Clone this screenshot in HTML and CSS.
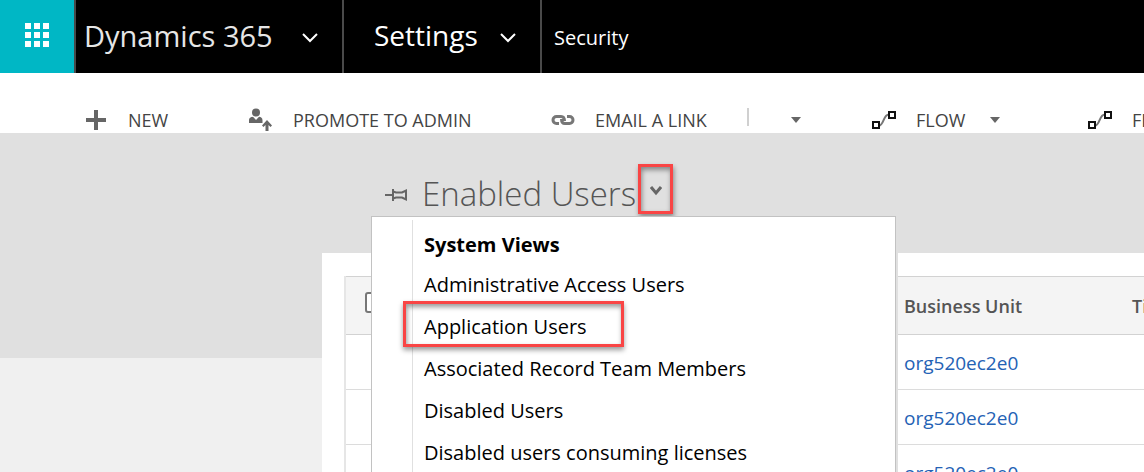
FILE: index.html
```html
<!DOCTYPE html>
<html lang="en">
<head>
<meta charset="utf-8">
<title>Users - Dynamics 365</title>
<link rel="stylesheet" href="styles.css">
</head>
<body>
<header class="topbar">
  <button class="waffle" aria-label="App launcher">
    <svg width="24" height="24" viewBox="0 0 24 24" fill="#fff" shape-rendering="crispEdges"><path d="M0 0h6v6H0zM9 0h6v6H9zM18 0h6v6h-6zM0 9h6v6H0zM9 9h6v6H9zM18 9h6v6h-6zM0 18h6v6H0zM9 18h6v6H9zM18 18h6v6h-6z"/></svg>
  </button>
  <button class="nav-item nav-brand"><span>Dynamics 365</span>
    <svg class="nav-chevron" width="16" height="10" viewBox="0 0 16 10" fill="none" stroke="#fff" stroke-width="2"><path d="M1 1l7 7 7-7"/></svg>
  </button>
  <button class="nav-item nav-area"><span>Settings</span>
    <svg class="nav-chevron" width="16" height="10" viewBox="0 0 16 10" fill="none" stroke="#fff" stroke-width="2"><path d="M1 1l7 7 7-7"/></svg>
  </button>
  <a class="nav-page" href="#">Security</a>
</header>

<nav class="commands" aria-label="Commands">
  <button class="command command-new">
    <svg class="command-icon" width="20" height="20" viewBox="0 0 20 20" fill="#666"><path d="M8 0h4v8h8v4h-8v8H8v-8H0V8h8z"/></svg>
    <span>NEW</span>
  </button>
  <button class="command command-promote">
    <svg class="command-icon" width="24" height="24" viewBox="0 0 24 24" fill="#666"><circle cx="7" cy="4.500" r="4"/><path d="M0 15v-2.500C0 9.500 2 9 4 8.700L7 12l3-3.300c2 .300 3.500 1 3.500 3.800V15z"/><path d="M18 12l5 5.500-1.500 1.500-2-2V23h-3v-6l-2 2-1.500-1.500z"/></svg>
    <span>PROMOTE TO ADMIN</span>
  </button>
  <button class="command command-email">
    <svg class="command-icon" width="24" height="12" viewBox="0 0 24 12" fill="none" stroke="#777" stroke-width="3"><path d="M8 9.500H5.500a3.500 3.500 0 0 1 0-7H10q3.500 0 3.500 4.500"/><path d="M16 2.500h2.500a3.500 3.500 0 0 1 0 7H14q-3.500 0-3.500-4.500"/></svg>
    <span>EMAIL A LINK</span>
  </button>
  <span class="divider"></span>
  <button class="more" aria-label="More commands"><svg class="caret" width="10" height="6" viewBox="0 0 10 6" fill="#666"><path d="M0 0h10L5 6z"/></svg></button>
  <button class="command command-flow">
    <svg class="command-icon" width="24" height="18" viewBox="0 0 24 18" fill="none"><path d="M7 14.500c5 0 4-11 10-11" stroke="#777" stroke-width="2"/><path d="M1 11h6v6H1zM17 1h6v6h-6z" fill="#fff" stroke="#111" stroke-width="2"/></svg>
    <span>FLOW</span>
    <svg class="caret" width="10" height="6" viewBox="0 0 10 6" fill="#666"><path d="M0 0h10L5 6z"/></svg>
  </button>
  <button class="command">
    <svg class="command-icon" width="24" height="18" viewBox="0 0 24 18" fill="none"><path d="M7 14.500c5 0 4-11 10-11" stroke="#777" stroke-width="2"/><path d="M1 11h6v6H1zM17 1h6v6h-6z" fill="#fff" stroke="#111" stroke-width="2"/></svg>
    <span>FLOW</span>
  </button>
</nav>

<main class="workspace">
  <section class="view">
    <div class="view-head">
      <svg class="pin" width="22" height="14" viewBox="0 0 22 14" fill="none" stroke="#666" stroke-width="2"><path d="M0 7h8M8 1v12M8 3.500l3 1h6l4-2v9l-4-2h-6l-3 1"/></svg>
      <h1 class="view-title">Enabled Users</h1>
      <button class="view-switch" aria-label="Select a view">
        <svg width="12" height="10" viewBox="0 0 12 10" fill="none" stroke="#666" stroke-width="3"><path d="M1 1l5 6 5-6"/></svg>
      </button>
    </div>
    <div class="view-menu">
      <h2 class="menu-heading">System Views</h2>
      <a class="menu-item" href="#">Administrative Access Users</a>
      <a class="menu-item menu-item-marked" href="#">Application Users</a>
      <a class="menu-item" href="#">Associated Record Team Members</a>
      <a class="menu-item" href="#">Disabled Users</a>
      <a class="menu-item" href="#">Disabled users consuming licenses</a>
    </div>
    <div class="grid-panel">
      <table class="grid">
        <colgroup><col class="col-select"><col class="col-name"><col class="col-unit"><col></colgroup>
        <thead><tr><th><input class="check" type="checkbox" aria-label="Select all"></th><th></th><th scope="col">Business Unit</th><th scope="col">Title</th></tr></thead>
        <tbody>
          <tr><td></td><td></td><td><a href="#">org520ec2e0</a></td><td></td></tr>
          <tr><td></td><td></td><td><a href="#">org520ec2e0</a></td><td></td></tr>
          <tr><td></td><td></td><td><a href="#">org520ec2e0</a></td><td></td></tr>
        </tbody>
      </table>
    </div>
  </section>
</main>
</body>
</html>
```

FILE: styles.css
```css
*, *::after { box-sizing: border-box; }
body {
  margin: 0;
  height: 100vh;
  display: flex;
  flex-direction: column;
  overflow: hidden;
  background: #fff;
  font-family: "Open Sans", "Noto Sans", sans-serif;
  font-size: 19px;
}
button { border: 0; padding: 0; background: none; font: inherit; color: inherit; white-space: nowrap; }
a { text-decoration: none; color: inherit; }
svg { display: block; flex: none; }

.topbar { display: flex; flex: none; height: 73px; background: #000; color: #fff; }
.waffle { display: flex; align-items: center; justify-content: center; width: 76px; padding-bottom: 3px; background: #00b7c5; border-right: 2px solid #4a4a4a; }
.nav-item { display: flex; align-items: center; border-right: 2px solid #4a4a4a; padding-bottom: 3px; font-size: 28px; }
.nav-brand { width: 268px; padding-left: 8px; color: #e6e6e6; gap: 29px; font-size: 29px; }
.nav-area { width: 198px; padding-left: 30px; gap: 22px; }
.nav-chevron { margin-top: 6px; }
.nav-page { display: flex; align-items: center; padding: 2px 0 0 12px; font-size: 20px; }

.commands { display: flex; flex: none; align-items: center; height: 60px; padding: 34px 0 0 86px; overflow: hidden; color: #444; font-size: 18px; }
.command { display: flex; flex: none; align-items: center; line-height: 24px; }
.command-new { gap: 22px; width: 163px; }
.command-promote { gap: 20px; width: 302px; }
.command-email { gap: 20px; width: 196px; }
.divider { flex: none; width: 2px; height: 18px; margin-bottom: 6px; background: #d0d0d0; }
.more { flex: none; width: 123px; padding-left: 42px; }
.command-flow { width: 216px; }
.command-flow, .command:last-child { gap: 20px; }
.command-flow .caret { margin-left: 5px; }

.workspace { flex: 1; min-height: 0; display: flex; overflow: hidden; padding-left: 322px; background: linear-gradient(#e0e0e0 225px, #f0f0f0 225px); }
.view { position: relative; flex: 1; min-width: 0; }
.view-head { display: flex; align-items: center; height: 120px; padding-left: 63px; }
.pin { margin-top: 4px; }
.view-title { margin: 0 0 0 15px; color: #555; font-size: 33px; font-weight: 300; white-space: nowrap; }
.view-switch { display: flex; align-items: center; justify-content: center; width: 35px; height: 50px; padding-top: 4px; margin: 0 0 8px 2px; border: 3px solid #f94545; box-shadow: 1px 3px 5px #0006, inset 1px 3px 5px #0006; }

.view-menu { position: absolute; z-index: 1; top: 83px; left: 49px; width: 525px; height: 300px; padding: 8px 0 0 52px; border: 1px solid #c2c2c2; background: linear-gradient(#e0e0e0, #e0e0e0) 40px 3px / 1px 100% no-repeat #fff; box-shadow: 2px 0 #e0e0e0; color: #000; font-size: 20px; }
.menu-heading { margin: 0; font-size: 20px; line-height: 39px; }
.menu-item { position: relative; display: block; line-height: 42px; }
.menu-item-marked::after { content: ""; position: absolute; top: -5px; left: -21px; width: 221px; height: 46px; border: 3px solid #f94545; box-shadow: 0 3px 5px #0006, inset 1px 3px 5px #0006; }

.grid-panel { padding: 23px 0 40px 22px; overflow: hidden; background: #fff; }
.grid { width: 100%; min-width: 880px; table-layout: fixed; border-collapse: separate; border-spacing: 0; border-left: 2px solid #e6e6e6; text-align: left; }
.col-select { width: 40px; }
.col-name { width: 510px; }
.col-unit { width: 228px; }
.grid th, .grid td { padding: 0 8px; }
.grid th { height: 59px; border: solid #d2d2d2; border-width: 1px 0; background: #f4f4f4; color: #555; font-size: 18px; font-weight: 600; }
.grid td { height: 55px; padding-top: 2px; border-bottom: 1px solid #dcdcdc; color: #2462b5; }
.grid th:first-child { padding-left: 19px; }
.check { display: block; width: 21px; height: 21px; margin: 0 0 6px; appearance: none; border: 2px solid #777; border-radius: 3px; background: #fff; }
```
